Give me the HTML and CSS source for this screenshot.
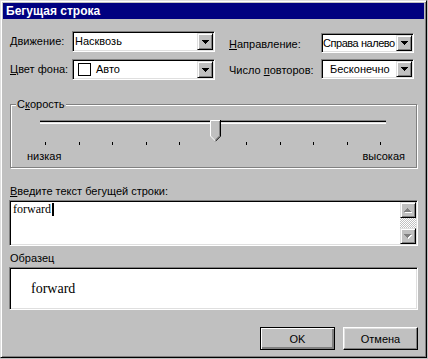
FILE: index.html
```html
<!doctype html>
<html lang="ru">
<head>

    <meta charset="utf-8">
    <title>Бегущая строка</title>

    <link rel="stylesheet" href="styles.css">

</head>
<body>

    <div class="Window">

        <div class="Title">Бегущая строка</div>

        <div class="Content">

            <!-- options -->
            <div class="Options">
                <div class="OptionsCol">
                    <div class="Field">
                        <span class="Label LabelLeft"><u>Д</u>вижение:</span>
                        <div class="Combo ComboLeft">
                            <span class="ComboText">Насквозь</span>
                            <span class="DropBtn"><svg width="7" height="4" viewBox="0 0 7 4"><path d="M0 0h7v1H0zM1 1h5v1H1zM2 2h3v1H2zM3 3h1v1H3z"/></svg></span>
                        </div>
                    </div>
                    <div class="Field">
                        <span class="Label LabelLeft"><u>Ц</u>вет фона:</span>
                        <div class="Combo ComboLeft">
                            <span class="ComboText ComboColor"><span class="Swatch"></span>Авто</span>
                            <span class="DropBtn"><svg width="7" height="4" viewBox="0 0 7 4"><path d="M0 0h7v1H0zM1 1h5v1H1zM2 2h3v1H2zM3 3h1v1H3z"/></svg></span>
                        </div>
                    </div>
                </div>
                <div class="OptionsCol OptionsRight">
                    <div class="Field">
                        <span class="Label LabelRight"><u>Н</u>аправление:</span>
                        <div class="Combo ComboRight">
                            <span class="ComboText ComboTight">Справа налево</span>
                            <span class="DropBtn"><svg width="7" height="4" viewBox="0 0 7 4"><path d="M0 0h7v1H0zM1 1h5v1H1zM2 2h3v1H2zM3 3h1v1H3z"/></svg></span>
                        </div>
                    </div>
                    <div class="Field">
                        <span class="Label LabelRight">Число <u>п</u>овторов:</span>
                        <div class="Combo ComboRight">
                            <span class="ComboText ComboWide">Бесконечно</span>
                            <span class="DropBtn"><svg width="7" height="4" viewBox="0 0 7 4"><path d="M0 0h7v1H0zM1 1h5v1H1zM2 2h3v1H2zM3 3h1v1H3z"/></svg></span>
                        </div>
                    </div>
                </div>
            </div>

            <!-- speed -->
            <div class="Group">
                <div class="GroupTitle">С<u>к</u>орость</div>
                <div class="Slider">
                    <div class="Track"></div>
                    <svg class="Thumb" width="11" height="22" viewBox="0 0 11 22">
                        <path d="M0 0H11V16L5.5 21.5L0 16Z" fill="#c0c0c0"/>
                        <path d="M0.5 16V0.5H10" fill="none" stroke="#fff"/>
                        <path d="M0.5 16L5.5 21" fill="none" stroke="#fff"/>
                        <path d="M9.5 1V15.8L5.5 19.8" fill="none" stroke="#808080"/>
                        <path d="M10.5 0V16.2L5.5 21.2" fill="none" stroke="#000"/>
                    </svg>
                </div>
                <div class="Ticks">
                    <i></i><i></i><i></i><i></i><i></i><i class="TickHidden"></i><i></i><i></i><i></i><i></i><i></i>
                </div>
                <div class="Scale">
                    <span>низкая</span>
                    <span>высокая</span>
                </div>
            </div>

            <!-- text -->
            <div class="Label Caption"><u>В</u>ведите текст бегущей строки:</div>
            <div class="TextBox">
                <div class="TextValue">forward<span class="Caret"></span></div>
                <div class="ScrollBar">
                    <span class="ScrollBtn"><svg width="8" height="5" viewBox="0 0 8 5"><path fill="#fff" d="M4 1h1v1H4zM3 2h3v1H3zM2 3h5v1H2zM1 4h7v1H1z"/><path fill="#808080" d="M3 0h1v1H3zM2 1h3v1H2zM1 2h5v1H1zM0 3h7v1H0z"/></svg></span>
                    <span class="ScrollTrack"></span>
                    <span class="ScrollBtn"><svg width="8" height="5" viewBox="0 0 8 5"><path fill="#fff" d="M1 1h7v1H1zM2 2h5v1H2zM3 3h3v1H3zM4 4h1v1H4z"/><path fill="#808080" d="M0 0h7v1H0zM1 1h5v1H1zM2 2h3v1H2zM3 3h1v1H3z"/></svg></span>
                </div>
            </div>

            <!-- sample -->
            <div class="Label Caption CaptionSample">Образец</div>
            <div class="Preview">forward</div>

            <!-- buttons -->
            <div class="Buttons">
                <button class="Button ButtonDefault">OK</button>
                <button class="Button">Отмена</button>
            </div>

        </div>

    </div>

</body>
</html>
```

FILE: styles.css
```css
*, *:before, *:after {
    box-sizing: border-box;
    margin: 0;
    padding: 0;
}

html, body {
    background: #c0c0c0;
}

body {
    font-family: "Liberation Sans", Arial, sans-serif;
    font-size: 11px;
    line-height: 13px;
    color: #000;
}

u {
    text-decoration: underline;
    text-underline-offset: 1px;
}

.Window {
    width: 427px;
    height: 358px;
    padding: 2px;
    border: 1px solid;
    border-color: #dfdfdf #000 #000 #dfdfdf;
    box-shadow: inset 1px 1px #fff, inset -1px -1px #808080;
    display: flex;
    flex-direction: column;
}

.Title {
    height: 16px;
    padding-left: 3px;
    background: #000080;
    color: #fff;
    font-size: 12px;
    font-weight: bold;
    line-height: 16px;
}

.Content {
    padding: 12px 6px 0 6px;
    display: flex;
    flex-direction: column;
}

/* options */

.Options {
    display: flex;
}

.OptionsCol {
    display: flex;
    flex-direction: column;
    gap: 7px;
}

.OptionsRight {
    margin-left: 14px;
    padding-top: 2px;
    gap: 6px;
}

.Field {
    display: flex;
    align-items: center;
}

.LabelLeft {
    width: 63px;
    padding-left: 1px;
}

.LabelRight {
    width: 92px;
    padding-top: 2px;
}

.Combo {
    height: 21px;
    padding: 1px;
    display: flex;
    background: #fff;
    border: 1px solid;
    border-color: #808080 #fff #fff #808080;
    box-shadow: inset 1px 1px #000, inset -1px -1px #dfdfdf;
}

.ComboLeft {
    width: 143px;
}

.ComboRight {
    width: 93px;
    height: 20px;
}

.ComboText {
    flex: 1;
    min-width: 0;
    padding-left: 1px;
    display: flex;
    align-items: center;
    white-space: nowrap;
    overflow: hidden;
}

.ComboTight {
    padding-left: 0;
    letter-spacing: -0.45px;
}

.ComboWide {
    padding-left: 7px;
}

.ComboColor {
    padding-left: 4px;
}

.Swatch {
    width: 13px;
    height: 13px;
    margin-right: 5px;
    border: 1px solid #000;
    background: #fff;
}

.DropBtn {
    width: 16px;
    flex: none;
    display: flex;
    align-items: center;
    justify-content: center;
    background: #c0c0c0;
    border: 1px solid;
    border-color: #dfdfdf #000 #000 #dfdfdf;
    box-shadow: inset 1px 1px #fff, inset -1px -1px #808080;
}

/* speed */

.Group {
    height: 64px;
    margin: 24px 1px 0 1px;
    border: 1px solid #808080;
    box-shadow: inset 1px 1px #fff, 1px 1px #fff;
}

.GroupTitle {
    width: fit-content;
    margin: -7px 0 0 5px;
    padding: 0 1px;
    background: #c0c0c0;
}

.Slider {
    position: relative;
    width: 346px;
    height: 22px;
    margin: 9px 0 0 29px;
}

.Track {
    height: 4px;
    margin-top: 8px;
    border-top: 1px solid #808080;
    border-bottom: 1px solid #fff;
    background: linear-gradient(#000 50%, #dfdfdf 50%);
}

.Thumb {
    position: absolute;
    left: 170px;
    top: 0;
}

.Ticks {
    width: 346px;
    height: 3px;
    margin-left: 29px;
    padding: 0 5px;
    display: flex;
    justify-content: space-between;
}

.Ticks i {
    width: 1px;
    height: 3px;
    background: #000;
}

.Ticks .TickHidden {
    visibility: hidden;
}

.Scale {
    width: 378px;
    margin: 5px 0 0 16px;
    display: flex;
    justify-content: space-between;
}

/* text */

.Caption {
    margin: 17px 0 0 1px;
}

.CaptionSample {
    margin-top: 6px;
}

.TextBox {
    height: 46px;
    margin-top: 2px;
    padding: 1px;
    display: flex;
    background: #fff;
    border: 1px solid;
    border-color: #808080 #fff #fff #808080;
    box-shadow: inset 1px 1px #000, inset -1px -1px #dfdfdf;
}

.TextValue {
    flex: 1;
    padding: 1px 2px;
    font-family: "Liberation Serif", "Times New Roman", serif;
    font-size: 12px;
    line-height: 13px;
}

.Caret {
    display: inline-block;
    width: 2px;
    height: 13px;
    margin-left: 1px;
    vertical-align: -3px;
    background: #000;
}

.ScrollBar {
    width: 16px;
    display: flex;
    flex-direction: column;
}

.ScrollBtn {
    height: 16px;
    display: flex;
    align-items: center;
    justify-content: center;
    background: #c0c0c0;
    border: 1px solid;
    border-color: #dfdfdf #000 #000 #dfdfdf;
    box-shadow: inset 1px 1px #fff, inset -1px -1px #808080;
}

.ScrollTrack {
    flex: 1;
    background: repeating-conic-gradient(#c0c0c0 0 25%, #fff 0 50%) 0 0 / 2px 2px;
}

.Preview {
    height: 43px;
    margin-top: 2px;
    padding-left: 21px;
    display: flex;
    align-items: center;
    background: #fff;
    border: 1px solid;
    border-color: #808080 #fff #fff #808080;
    box-shadow: inset 1px 1px #000, inset -1px -1px #dfdfdf;
    font-family: "Liberation Serif", "Times New Roman", serif;
    font-size: 14px;
}

/* buttons */

.Buttons {
    margin-top: 17px;
    display: flex;
    justify-content: flex-end;
    gap: 8px;
}

.Button {
    width: 75px;
    height: 23px;
    background: #c0c0c0;
    border: 1px solid;
    border-color: #fff #000 #000 #fff;
    box-shadow: inset -1px -1px #808080, inset 1px 1px #dfdfdf;
    font-family: "Liberation Sans", Arial, sans-serif;
    font-size: 11px;
    color: #000;
}

.ButtonDefault {
    border-color: #000;
    box-shadow: inset 1px 1px #fff, inset -1px -1px #808080, inset -2px -2px #808080;
}
```
